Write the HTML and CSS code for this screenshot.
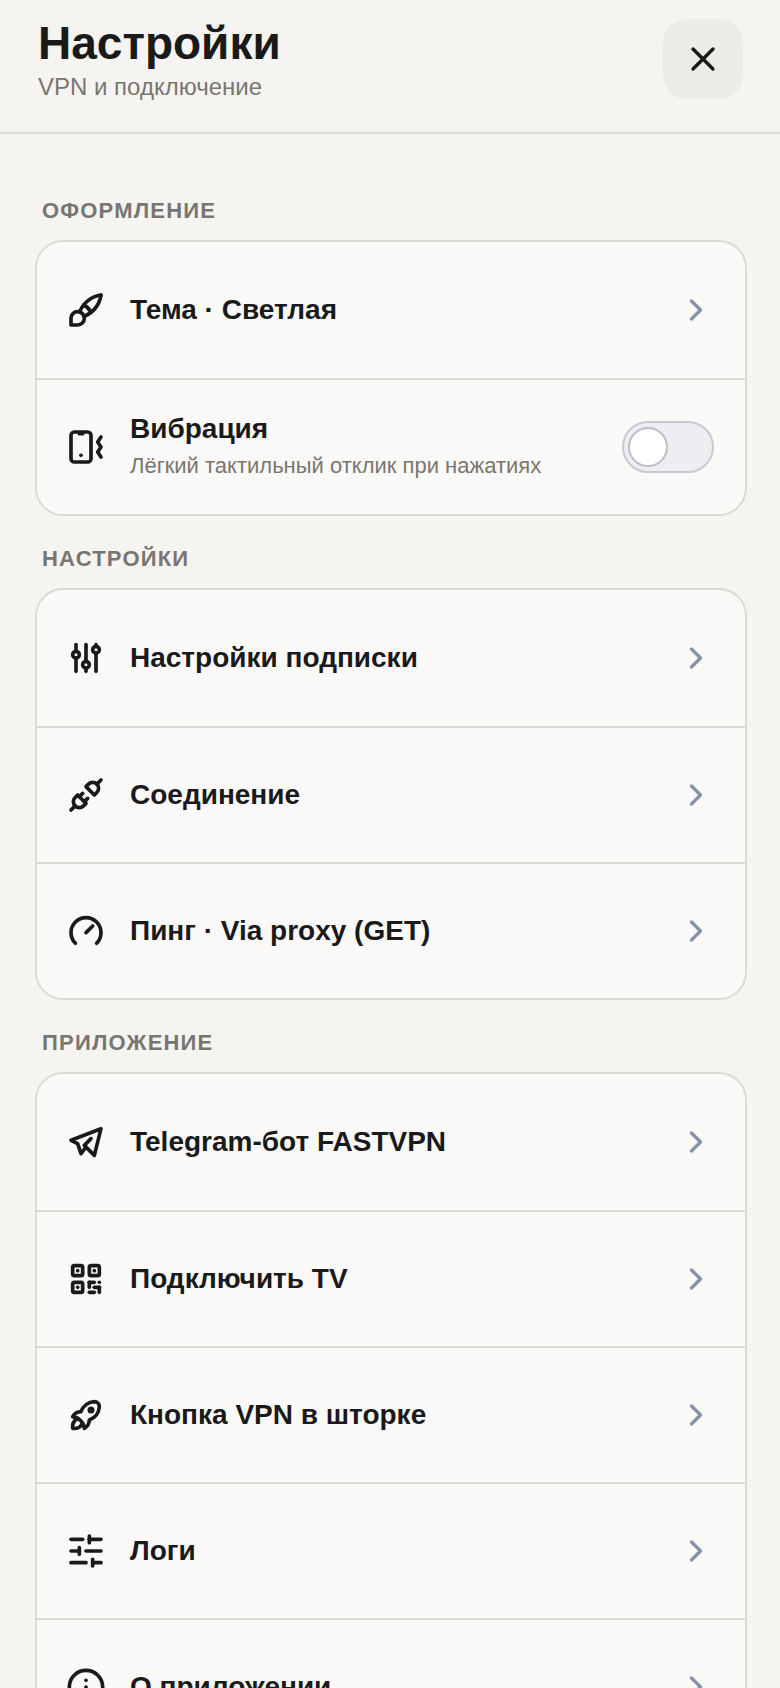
FILE: index.html
```html
<!DOCTYPE html>
<html lang="ru">
<head>
    <meta charset="UTF-8">
    <meta name="viewport" content="width=device-width, initial-scale=1.0">
    <title>Настройки</title>
    <link rel="stylesheet" href="styles.css">
</head>
<body>
    <div class="screen">
        <div class="header">
            <div class="header-text">
                <h1>Настройки</h1>
                <p>VPN и подключение</p>
            </div>
            <button class="close-btn" aria-label="Закрыть">
                <svg class="close-icon" viewBox="0 0 24 24"><path d="M18 6l-12 12"/><path d="M6 6l12 12"/></svg>
            </button>
        </div>

        <div class="content">
            <div class="section">
                <div class="section-label">Оформление</div>
                <div class="card">
                    <div class="row">
                        <svg class="icon" viewBox="0 0 24 24"><path d="M3 21v-4a4 4 0 1 1 4 4h-4"/><path d="M21 3a16 16 0 0 0 -12.8 10.2"/><path d="M21 3a16 16 0 0 1 -10.2 12.8"/><path d="M10.6 9a9 9 0 0 1 4.4 4.4"/></svg>
                        <div class="row-text"><div class="row-title">Тема · Светлая</div></div>
                        <svg class="chevron" viewBox="0 0 24 24"><path d="M9 6l6 6l-6 6"/></svg>
                    </div>
                    <div class="row">
                        <svg class="icon" viewBox="0 0 24 24"><path d="M3 5a2 2 0 0 1 2 -2h8a2 2 0 0 1 2 2v14a2 2 0 0 1 -2 2h-8a2 2 0 0 1 -2 -2z"/><path d="M8 4h2"/><path d="M9 17v.01"/><path d="M21 6l-2 3l2 3l-2 3l2 3"/></svg>
                        <div class="row-text">
                            <div class="row-title">Вибрация</div>
                            <div class="row-sub">Лёгкий тактильный отклик при нажатиях</div>
                        </div>
                        <div class="toggle"><div class="knob"></div></div>
                    </div>
                </div>
            </div>

            <div class="section">
                <div class="section-label">Настройки</div>
                <div class="card">
                    <div class="row">
                        <svg class="icon" viewBox="0 0 24 24"><path d="M4 10a2 2 0 1 0 4 0a2 2 0 0 0 -4 0"/><path d="M6 4v4"/><path d="M6 12v8"/><path d="M10 16a2 2 0 1 0 4 0a2 2 0 0 0 -4 0"/><path d="M12 4v10"/><path d="M12 18v2"/><path d="M16 7a2 2 0 1 0 4 0a2 2 0 0 0 -4 0"/><path d="M18 4v1"/><path d="M18 9v11"/></svg>
                        <div class="row-text"><div class="row-title">Настройки подписки</div></div>
                        <svg class="chevron" viewBox="0 0 24 24"><path d="M9 6l6 6l-6 6"/></svg>
                    </div>
                    <div class="row">
                        <svg class="icon" viewBox="0 0 24 24"><path d="M7 12l5 5l-1.5 1.5a3.536 3.536 0 1 1 -5 -5l1.5 -1.5z"/><path d="M17 12l-5 -5l1.5 -1.5a3.536 3.536 0 1 1 5 5l-1.5 1.5z"/><path d="M3 21l2.5 -2.5"/><path d="M18.5 5.5l2.5 -2.5"/><path d="M10 11l-2 2"/><path d="M13 14l-2 2"/></svg>
                        <div class="row-text"><div class="row-title">Соединение</div></div>
                        <svg class="chevron" viewBox="0 0 24 24"><path d="M9 6l6 6l-6 6"/></svg>
                    </div>
                    <div class="row">
                        <svg class="icon" viewBox="0 0 24 24"><path d="M5.636 19.364a9 9 0 1 1 12.728 0"/><path d="M16 9l-4 4"/></svg>
                        <div class="row-text"><div class="row-title">Пинг · Via proxy (GET)</div></div>
                        <svg class="chevron" viewBox="0 0 24 24"><path d="M9 6l6 6l-6 6"/></svg>
                    </div>
                </div>
            </div>

            <div class="section">
                <div class="section-label">Приложение</div>
                <div class="card">
                    <div class="row">
                        <svg class="icon" viewBox="0 0 24 24"><path d="M15 10l-4 4l6 6l4 -16l-18 7l4 2l2 6l3 -4"/></svg>
                        <div class="row-text"><div class="row-title">Telegram-бот FASTVPN</div></div>
                        <svg class="chevron" viewBox="0 0 24 24"><path d="M9 6l6 6l-6 6"/></svg>
                    </div>
                    <div class="row">
                        <svg class="icon" viewBox="0 0 24 24"><path d="M4 5a1 1 0 0 1 1 -1h4a1 1 0 0 1 1 1v4a1 1 0 0 1 -1 1h-4a1 1 0 0 1 -1 -1z"/><path d="M7 17v.01"/><path d="M14 5a1 1 0 0 1 1 -1h4a1 1 0 0 1 1 1v4a1 1 0 0 1 -1 1h-4a1 1 0 0 1 -1 -1z"/><path d="M7 7v.01"/><path d="M4 15a1 1 0 0 1 1 -1h4a1 1 0 0 1 1 1v4a1 1 0 0 1 -1 1h-4a1 1 0 0 1 -1 -1z"/><path d="M17 7v.01"/><path d="M14 14h3"/><path d="M20 14v.01"/><path d="M14 14v3"/><path d="M14 20h3"/><path d="M17 17h3"/><path d="M20 17v3"/></svg>
                        <div class="row-text"><div class="row-title">Подключить TV</div></div>
                        <svg class="chevron" viewBox="0 0 24 24"><path d="M9 6l6 6l-6 6"/></svg>
                    </div>
                    <div class="row">
                        <svg class="icon" viewBox="0 0 24 24"><path d="M4 13a8 8 0 0 1 7 7a6 6 0 0 0 3 -5a9 9 0 0 0 6 -8a3 3 0 0 0 -3 -3a9 9 0 0 0 -8 6a6 6 0 0 0 -5 3"/><path d="M7 14a6 6 0 0 0 -3 6a6 6 0 0 0 6 -3"/><path d="M15 9m-1 0a1 1 0 1 0 2 0a1 1 0 1 0 -2 0"/></svg>
                        <div class="row-text"><div class="row-title">Кнопка VPN в шторке</div></div>
                        <svg class="chevron" viewBox="0 0 24 24"><path d="M9 6l6 6l-6 6"/></svg>
                    </div>
                    <div class="row">
                        <svg class="icon" viewBox="0 0 24 24"><path d="M3 5h7"/><path d="M14 5h7"/><path d="M14 3v4"/><path d="M3 12h5"/><path d="M12 12h9"/><path d="M8 10v4"/><path d="M3 19h9"/><path d="M16 19h5"/><path d="M16 17v4"/></svg>
                        <div class="row-text"><div class="row-title">Логи</div></div>
                        <svg class="chevron" viewBox="0 0 24 24"><path d="M9 6l6 6l-6 6"/></svg>
                    </div>
                    <div class="row">
                        <svg class="icon" viewBox="0 0 24 24"><circle cx="12" cy="12" r="10"/><path d="M12 8h.01"/><path d="M12 16v-4"/></svg>
                        <div class="row-text"><div class="row-title">О приложении</div></div>
                        <svg class="chevron" viewBox="0 0 24 24"><path d="M9 6l6 6l-6 6"/></svg>
                    </div>
                </div>
            </div>
        </div>
    </div>
</body>
</html>
```

FILE: styles.css
```css
* {
    box-sizing: border-box;
}

html,
body {
    margin: 0;
    height: 100%;
    overflow: hidden;
}

body {
    font-family: 'Liberation Sans', Arial, sans-serif;
    background-color: #f5f4f0;
    color: #1a1a1a;
}

.screen {
    height: 1688px;
    overflow: hidden;
}

.header {
    display: flex;
    justify-content: space-between;
    align-items: flex-start;
    height: 134px;
    padding: 19px 37px 0 38px;
    border-bottom: 2px solid #dcdad4;
}

.header h1 {
    margin: 0;
    font-size: 46px;
    font-weight: 700;
    line-height: 48px;
}

.header p {
    margin: 5px 0 0;
    font-size: 24px;
    line-height: 30px;
    color: #78766f;
}

.close-btn {
    display: flex;
    align-items: center;
    justify-content: center;
    width: 80px;
    height: 80px;
    padding: 0;
    border: none;
    border-radius: 24px;
    background-color: #ecebe7;
}

.close-icon {
    width: 40px;
    height: 40px;
    fill: none;
    stroke: #1a1a1a;
    stroke-width: 2;
    stroke-linecap: round;
}

.content {
    padding: 64px 33px 0 35px;
}

.section {
    margin-bottom: 30px;
}

.section-label {
    margin: 0 0 17px 7px;
    font-size: 22px;
    font-weight: 700;
    line-height: 25px;
    letter-spacing: 1.2px;
    text-transform: uppercase;
    color: #78766f;
}

.card {
    border: 2px solid #dcdad4;
    border-radius: 28px;
    background-color: #faf9f7;
    overflow: hidden;
}

.row {
    display: flex;
    align-items: center;
    height: 136px;
    padding: 0 29px;
    border-bottom: 2px solid #dcdad4;
}

.row:first-child {
    height: 138px;
}

.row:last-child {
    height: 134px;
    border-bottom: none;
}

.icon {
    flex-shrink: 0;
    width: 40px;
    height: 40px;
    fill: none;
    stroke: #1a1a1a;
    stroke-width: 2.2;
    stroke-linecap: round;
    stroke-linejoin: round;
}

.row-text {
    flex: 1;
    margin-left: 24px;
}

.row-title {
    font-size: 28px;
    font-weight: 700;
    line-height: 36px;
}

.row-sub {
    margin-top: 5px;
    padding-bottom: 3px;
    font-size: 22px;
    line-height: 28px;
    color: #78766f;
}

.chevron {
    flex-shrink: 0;
    width: 36px;
    height: 36px;
    margin-right: 2px;
    fill: none;
    stroke: #8593aa;
    stroke-width: 2.2;
    stroke-linecap: round;
    stroke-linejoin: round;
}

.toggle {
    flex-shrink: 0;
    display: flex;
    align-items: center;
    width: 92px;
    height: 52px;
    margin-right: 2px;
    padding-left: 4px;
    border: 2px solid #c8cad0;
    border-radius: 26px;
    background-color: #eceef1;
}

.knob {
    width: 40px;
    height: 40px;
    border: 2px solid #bdbfc6;
    border-radius: 50%;
    background-color: #fff;
}
```
